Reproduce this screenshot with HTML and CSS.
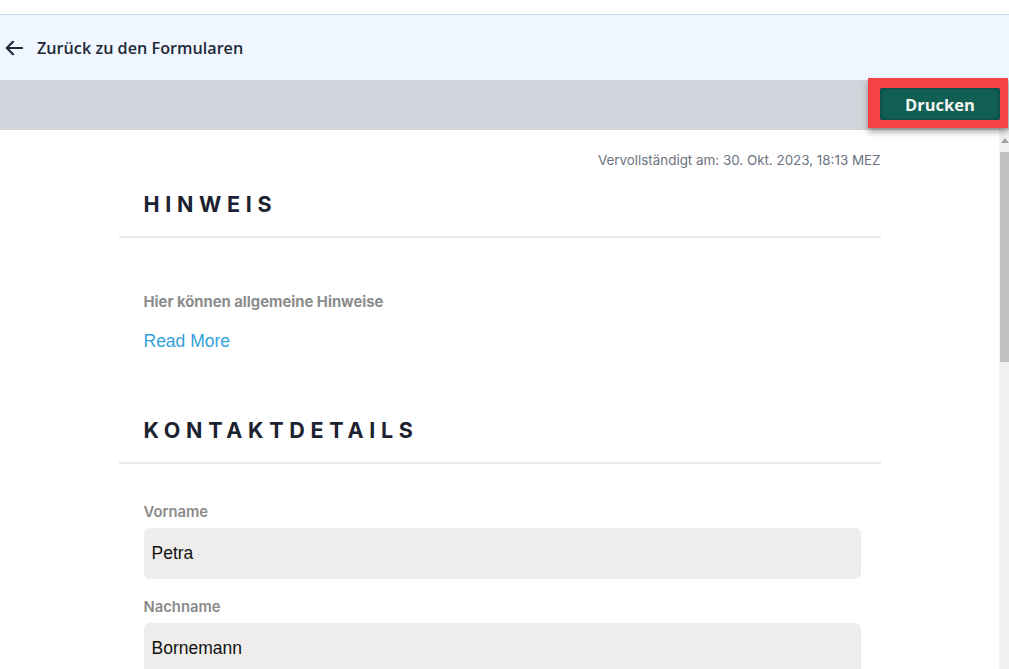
FILE: index.html
```html
<!DOCTYPE html>
<html lang="de">
<head>
    <meta charset="UTF-8">
    <meta name="viewport" content="width=device-width, initial-scale=1.0">
    <title>Formular ansehen</title>
    <link rel="stylesheet" href="styles.css">
</head>
<body>
    <div class="top-gap"></div>
    <header class="back-bar">
        <a href="#" class="back-link">
            <svg class="back-icon" width="18" height="16" viewBox="0 0 18 16">
                <path d="M17 8H2M8 1.8L1.8 8 8 14.2" fill="none" stroke="#1f2937" stroke-width="2.2" stroke-linecap="round" stroke-linejoin="round"/>
            </svg>
            <span>Zurück zu den Formularen</span>
        </a>
    </header>

    <div class="toolbar">
        <div class="highlight">
            <button class="print-btn">Drucken</button>
        </div>
    </div>

    <main class="viewer">
        <div class="content">
            <div class="sheet">
                <div class="completed-at">Vervollständigt am: 30. Okt. 2023, 18:13 MEZ</div>

                <section class="block">
                    <h2 class="block-title">HINWEIS</h2>
                    <div class="block-body notice">
                        <p class="notice-text">Hier können allgemeine Hinweise</p>
                        <a href="#" class="read-more">Read More</a>
                    </div>
                </section>

                <section class="block">
                    <h2 class="block-title">KONTAKTDETAILS</h2>
                    <div class="block-body fields">
                        <div class="field">
                            <label>Vorname</label>
                            <div class="field-value">Petra</div>
                        </div>
                        <div class="field">
                            <label>Nachname</label>
                            <div class="field-value">Bornemann</div>
                        </div>
                    </div>
                </section>
            </div>
        </div>

        <!-- scrollbar of the document viewer -->
        <div class="scrollbar">
            <div class="scroll-arrow"><span class="arrow-up"></span></div>
            <div class="scroll-thumb"></div>
        </div>
    </main>
</body>
</html>
```

FILE: styles.css
```css
* {
    margin: 0;
    padding: 0;
    box-sizing: border-box;
}

html, body {
    height: 100%;
    overflow: hidden;
}

body {
    font-family: Inter, "Noto Sans", sans-serif;
    background: white;
    color: #1f2937;
}

.top-gap {
    height: 14px;
    background: white;
}

.back-bar {
    height: 66px;
    background: #eff6ff;
    border-top: 1px solid #c7dcf7;
    display: flex;
    align-items: center;
    padding-left: 5px;
}

.back-link {
    display: flex;
    align-items: center;
    gap: 14px;
    text-decoration: none;
    color: #1f2937;
    font-family: "Open Sans", sans-serif;
    font-size: 16.2px;
    font-weight: 600;
}

.toolbar {
    height: 50px;
    background: #d1d5db;
    display: flex;
    justify-content: flex-end;
    align-items: flex-start;
}

.highlight {
    position: relative;
    z-index: 2;
    margin-top: -2px;
    margin-right: 1px;
    padding: 10px 8px 8px 12px;
    background: #f54242;
    box-shadow: 0 4px 6px rgba(0, 0, 0, 0.35);
}

.print-btn {
    display: block;
    width: 120px;
    height: 32px;
    background: #115e55;
    color: #f4f7f2;
    border: none;
    border-radius: 2px;
    font-family: "Open Sans", sans-serif;
    font-size: 16.5px;
    font-weight: 700;
    box-shadow: inset 0 0 3px rgba(0, 0, 0, 0.4);
    cursor: pointer;
}

.viewer {
    height: calc(100vh - 130px);
    display: flex;
}

.content {
    flex: 1;
    overflow: hidden;
}

.scrollbar {
    width: 10px;
    background: #f1f1f1;
    display: flex;
    flex-direction: column;
}

.scroll-arrow {
    height: 22px;
    display: flex;
    justify-content: flex-end;
    padding-top: 8px;
}

.arrow-up {
    width: 0;
    height: 0;
    border-left: 4px solid transparent;
    border-right: 4px solid transparent;
    border-bottom: 5px solid #a3a3a3;
}

.scroll-thumb {
    height: 210px;
    margin-left: 1px;
    background: #c1c1c1;
}

.sheet {
    max-width: 762px;
    margin: 0 auto;
}

.completed-at {
    text-align: right;
    font-size: 13.4px;
    line-height: 16px;
    color: #6b7280;
    padding-top: 22px;
}

.block-title {
    font-size: 21.5px;
    line-height: 28px;
    font-weight: 700;
    letter-spacing: 5.7px;
    color: #1c2230;
    padding: 0 25px 18px;
    border-bottom: 2px solid #e8e8e8;
    margin-top: 22px;
}

.block + .block .block-title {
    margin-top: 65px;
}

.block-body {
    padding: 0 20px 0 25px;
}

.notice {
    padding-top: 55px;
}

.notice-text {
    font-size: 14.8px;
    line-height: 18px;
    font-weight: 700;
    color: #8c8c8c;
}

.read-more {
    display: inline-block;
    margin-top: 20px;
    font-family: "Liberation Sans", Arial, sans-serif;
    font-size: 17.5px;
    line-height: 20px;
    color: #35a2db;
    text-decoration: none;
}

.fields {
    padding-top: 39px;
    display: flex;
    flex-direction: column;
    gap: 19px;
}

.field label {
    display: block;
    font-size: 14.8px;
    line-height: 18px;
    font-weight: 600;
    color: #8a8a8a;
    margin-bottom: 7px;
}

.field-value {
    height: 51px;
    background: #eeedeb;
    border-radius: 6px;
    padding-left: 8px;
    display: flex;
    align-items: center;
    font-family: "Liberation Sans", Arial, sans-serif;
    font-size: 17.5px;
    color: #111;
}
```
